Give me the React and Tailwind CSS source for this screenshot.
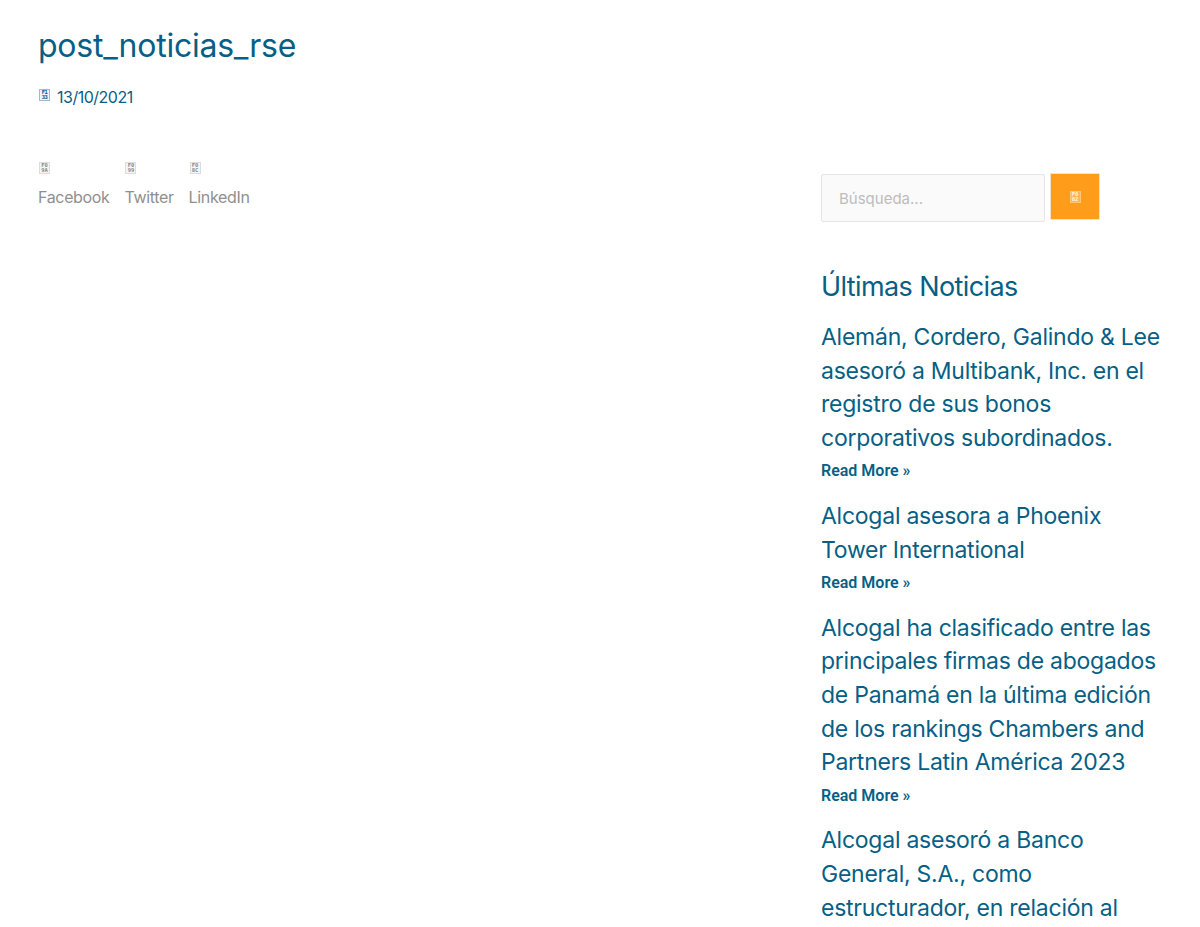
import React from 'react';

const posts = [
  {
    title: ['Alemán, Cordero, Galindo & Lee', 'asesoró a Multibank, Inc. en el', 'registro de sus bonos', 'corporativos subordinados.'],
  },
  {
    title: ['Alcogal asesora a Phoenix', 'Tower International'],
  },
  {
    title: ['Alcogal ha clasificado entre las', 'principales firmas de abogados', 'de Panamá en la última edición', 'de los rankings Chambers and', 'Partners Latin América 2023'],
  },
];

const lastPost = ['Alcogal asesoró a Banco', 'General, S.A., como', 'estructurador, en relación al'];

// missing-glyph box, the page's icon font did not load
const Tofu = ({ top, bottom, className }) => (
  <span className={`flex h-[12px] w-[11px] flex-col items-center justify-center border font-['DejaVu_Sans_Mono',monospace] text-[5.5px] leading-[5px] font-bold ${className}`}>
    <span>{top}</span>
    <span>{bottom}</span>
  </span>
);

const ShareLink = ({ top, bottom, label }) => (
  <a href="#" className="flex flex-col items-start gap-[13px] text-[#8f8f8f]">
    <Tofu top={top} bottom={bottom} className="ml-px border-[#dddddd] bg-[#f5f5f5] text-[#8a8a8a]" />
    <span className="font-['Inter',sans-serif] text-[16px] leading-[20px] tracking-[-0.35px]">{label}</span>
  </a>
);

export default function App() {
  return (
    <div className="flex h-[927px] justify-between overflow-hidden bg-white pl-[38px] pr-[39px] font-['Inter',sans-serif] text-[#075f85]">
      <main className="pt-[26px]">
        <h1 className="text-[32px] leading-[40px] tracking-[-0.25px]">post_noticias_rse</h1>
        <div className="mt-[20px] flex items-center gap-[7px] text-[16px] leading-[22px] tracking-[-0.5px]">
          <Tofu top="F1" bottom="33" className="mb-[4px] ml-px border-[#9dbccb] bg-[#eef4f7] text-[#005b82]" />
          <span>13/10/2021</span>
        </div>
        <div className="mt-[54px] flex gap-[15px]">
          <ShareLink top="F0" bottom="9A" label="Facebook" />
          <ShareLink top="F0" bottom="99" label="Twitter" />
          <ShareLink top="F0" bottom="8C" label="LinkedIn" />
        </div>
      </main>

      <aside className="w-[340px] pt-[173px]">
        <form className="flex items-start gap-[5px]">
          <input
            placeholder="Búsqueda..."
            className="mt-[1px] h-[48px] w-[224px] rounded-[2px] border border-[#e5e5e5] bg-[#fafafa] px-[17px] font-['Inter',sans-serif] text-[15px] placeholder:text-[#bdbdbd]"
          />
          <button type="button" className="flex h-[47px] w-[50px] items-center justify-center border border-[#f0e4d0] bg-[#ff9d1b]">
            <Tofu top="F0" bottom="02" className="border-[#ffc77a] bg-[#ffb552] text-[#fff4e2]" />
          </button>
        </form>

        <h2 className="mt-[46px] text-[27px] leading-[38px] tracking-[-0.6px]">Últimas Noticias</h2>

        <div className="mt-[15px]">
          {posts.map((post) => (
            <article key={post.title[0]} className="mb-[16.6px]">
              <h3 className="text-[23px] leading-[33.6px] tracking-[-0.25px]">
                {post.title.map((line) => (
                  <span key={line} className="block whitespace-nowrap">{line}</span>
                ))}
              </h3>
              <a href="#" className="mt-[4px] block font-['Roboto',sans-serif] text-[16px] leading-[24px] font-semibold">Read More »</a>
            </article>
          ))}
          <article>
            <h3 className="text-[23px] leading-[33.6px] tracking-[-0.25px]">
              {lastPost.map((line) => (
                <span key={line} className="block whitespace-nowrap">{line}</span>
              ))}
            </h3>
          </article>
        </div>
      </aside>
    </div>
  );
}
